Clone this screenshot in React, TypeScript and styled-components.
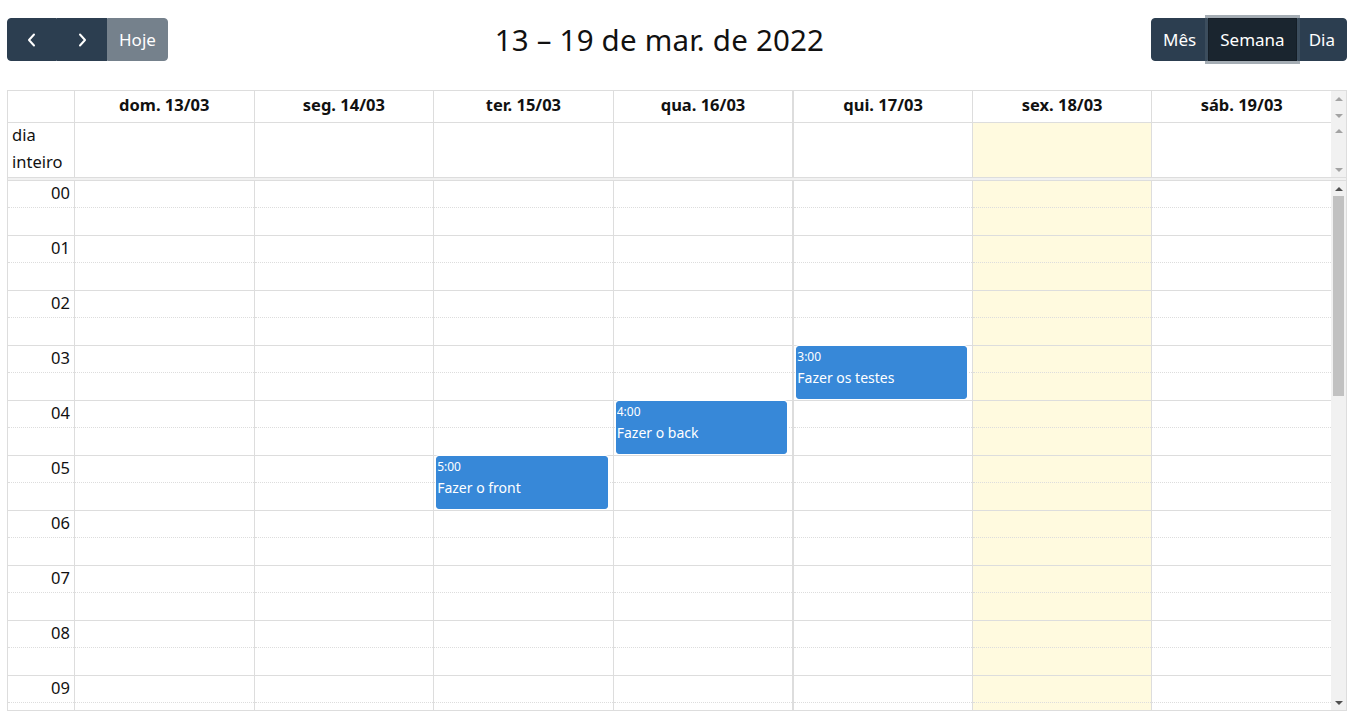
import React from 'react';
import styled, { createGlobalStyle } from 'styled-components';

const FONT = `"Noto Sans", "Open Sans", "DejaVu Sans", sans-serif`;
const LINE = '#dddddd';

const GlobalStyle = createGlobalStyle`
  html, body { margin: 0; padding: 0; background: #ffffff; overflow: hidden; }
  body { font-family: ${FONT}; color: #212529; font-size: 16px; }
  *, *::before, *::after { box-sizing: border-box; }
`;

const Page = styled.div`
  width: 1362px;
  padding: 18px 15px 0 7px;
`;

const Toolbar = styled.div`
  display: flex;
  align-items: center;
  justify-content: space-between;
  height: 43px;
  margin-bottom: 29px;
`;

const ButtonGroup = styled.div`
  display: inline-flex;
  position: relative;
`;

const Button = styled.button<{ $active?: boolean; $muted?: boolean; $icon?: boolean }>`
  height: 43px;
  width: ${(p) => (p.$icon ? '50px' : 'auto')};
  padding: ${(p) => (p.$icon ? '0' : '0 11px')};
  margin: 0;
  border: 1px solid ${(p) => (p.$active ? '#151e27' : '#2c3e50')};
  background: ${(p) => (p.$active ? '#1a252f' : '#2c3e50')};
  color: #ffffff;
  font-family: ${FONT};
  font-size: 17px;
  line-height: 1;
  display: inline-flex;
  align-items: center;
  justify-content: center;
  opacity: ${(p) => (p.$muted ? 0.65 : 1)};
  position: relative;
  z-index: ${(p) => (p.$active ? 1 : 0)};
  box-shadow: ${(p) => (p.$active ? '0 0 0 3px rgba(76, 91, 106, 0.5)' : 'none')};
  border-radius: 0;
  &:first-child { border-radius: 4px 0 0 4px; }
  &:last-child { border-radius: 0 4px 4px 0; }
`;

const Title = styled.h2`
  margin: 0;
  font-size: 29.5px;
  letter-spacing: 0.2px;
  font-weight: 400;
  color: #111;
`;

const Calendar = styled.div`
  border: 1px solid ${LINE};
  display: flex;
  flex-direction: column;
`;

const Section = styled.div<{ $h?: number }>`
  display: flex;
  height: ${(p) => (p.$h ? `${p.$h}px` : 'auto')};
`;

const SectionBody = styled.div`
  flex: 1;
  min-width: 0;
  overflow: hidden;
`;

const Scrollbar = styled.div`
  width: 15px;
  flex: 0 0 15px;
  background: #f1f1f1;
  display: flex;
  flex-direction: column;
`;

const ArrowBox = styled.div`
  height: 15px;
  flex: 0 0 15px;
  display: flex;
  align-items: center;
  justify-content: center;
`;

const Triangle = styled.div<{ $down?: boolean; $enabled?: boolean }>`
  width: 0;
  height: 0;
  border-left: 4px solid transparent;
  border-right: 4px solid transparent;
  ${(p) =>
    p.$down
      ? `border-top: 4px solid ${p.$enabled ? '#505050' : '#a3a3a3'};`
      : `border-bottom: 4px solid ${p.$enabled ? '#505050' : '#a3a3a3'};`}
`;

const Track = styled.div`
  flex: 1;
  padding: 0 2px;
`;

const Thumb = styled.div`
  height: 200px;
  background: #c1c1c1;
`;

const Grid = styled.div`
  display: grid;
  grid-template-columns: 66px repeat(7, 1fr);
`;

const HeadCell = styled.div<{ $first?: boolean; $thick?: boolean }>`
  height: 32px;
  padding-bottom: 4px;
  border-bottom: 1px solid ${LINE};
  border-left: ${(p) => (p.$first ? 'none' : `${p.$thick ? 2 : 1}px solid ${LINE}`)};
  font-weight: 700;
  font-size: 16.5px;
  display: flex;
  align-items: center;
  justify-content: center;
  color: #111;
`;

const AllDayAxis = styled.div`
  height: 54px;
  padding: 0 4px;
  font-size: 16.5px;
  color: #111;
`;

const AxisText = styled.div`
  line-height: 27px;
  margin-top: -2px;
`;

const AllDayCell = styled.div<{ $today?: boolean; $thick?: boolean }>`
  height: 54px;
  border-left: ${(p) => `${p.$thick ? 2 : 1}px solid ${LINE}`};
  background: ${(p) => (p.$today ? '#fffadf' : 'transparent')};
`;

const Divider = styled.div`
  height: 4px;
  border-top: 1px solid ${LINE};
  border-bottom: 1px solid ${LINE};
  background: #f1f1f1;
`;

const Column = styled.div<{ $axis?: boolean; $today?: boolean; $thick?: boolean }>`
  position: relative;
  display: flex;
  flex-direction: column;
  border-left: ${(p) => (p.$axis ? 'none' : `${p.$thick ? 2 : 1}px solid ${LINE}`)};
  background: ${(p) => (p.$today ? '#fffadf' : 'transparent')};
`;

const Hour = styled.div`
  height: 55px;
  border-bottom: 1px solid ${LINE};
`;

const HalfSlot = styled.div`
  height: 27px;
  border-bottom: 1px dotted ${LINE};
  text-align: right;
  padding: 0 4px;
  line-height: 24px;
  font-size: 16.5px;
  color: #111;
`;

const Event = styled.div`
  position: absolute;
  left: 2px;
  right: 5px;
  height: 53px;
  background: #3788d8;
  border: 1px solid #3788d8;
  border-radius: 3px;
  color: #ffffff;
  padding: 1px 1px 0 0;
  box-shadow: 0 0 0 1px #ffffff;
  overflow: hidden;
`;

const EventTime = styled.div`
  font-size: 12px;
  line-height: 18px;
  margin-bottom: 2px;
`;

const EventTitle = styled.div`
  font-size: 14px;
  line-height: 20px;
`;

const Chevron = ({ dir }: { dir: 'left' | 'right' }) => (
  <svg width="16" height="16" viewBox="0 0 16 16" fill="none">
    <polyline
      points={dir === 'left' ? '10,2.5 5,8 10,13.5' : '6,2.5 11,8 6,13.5'}
      stroke="#ffffff"
      strokeWidth="2"
      strokeLinecap="round"
      strokeLinejoin="round"
    />
  </svg>
);

const FakeScrollbar = ({ enabled }: { enabled?: boolean }) => (
  <Scrollbar>
    <ArrowBox>
      <Triangle $enabled={enabled} />
    </ArrowBox>
    <Track>{enabled && <Thumb />}</Track>
    <ArrowBox>
      <Triangle $down $enabled={enabled} />
    </ArrowBox>
  </Scrollbar>
);

const days = [
  'dom. 13/03',
  'seg. 14/03',
  'ter. 15/03',
  'qua. 16/03',
  'qui. 17/03',
  'sex. 18/03',
  'sáb. 19/03',
];
const TODAY = 5;
const THICK = 4;

const events: { day: number; hour: number; time: string; title: string }[] = [
  { day: 2, hour: 5, time: '5:00', title: 'Fazer o front' },
  { day: 3, hour: 4, time: '4:00', title: 'Fazer o back' },
  { day: 4, hour: 3, time: '3:00', title: 'Fazer os testes' },
];

const hours = Array.from({ length: 24 }, (_, i) => i);
const pad = (n: number) => (n < 10 ? `0${n}` : `${n}`);

export default function App() {
  return (
    <Page>
      <GlobalStyle />
      <Toolbar>
        <ButtonGroup>
          <Button $icon aria-label="prev">
            <Chevron dir="left" />
          </Button>
          <Button $icon aria-label="next">
            <Chevron dir="right" />
          </Button>
          <Button $muted>Hoje</Button>
        </ButtonGroup>
        <Title>13 – 19 de mar. de 2022</Title>
        <ButtonGroup>
          <Button>Mês</Button>
          <Button $active>Semana</Button>
          <Button>Dia</Button>
        </ButtonGroup>
      </Toolbar>
      <Calendar>
        <Section>
          <SectionBody>
            <Grid>
              <HeadCell $first />
              {days.map((d, i) => (
                <HeadCell key={d} $thick={i === THICK}>
                  {d}
                </HeadCell>
              ))}
            </Grid>
          </SectionBody>
          <FakeScrollbar />
        </Section>
        <Section>
          <SectionBody>
            <Grid>
              <AllDayAxis>
                <AxisText>
                  dia
                  <br />
                  inteiro
                </AxisText>
              </AllDayAxis>
              {days.map((d, i) => (
                <AllDayCell key={d} $today={i === TODAY} $thick={i === THICK} />
              ))}
            </Grid>
          </SectionBody>
          <FakeScrollbar />
        </Section>
        <Divider />
        <Section $h={529}>
          <SectionBody>
            <Grid>
              <Column $axis>
                {hours.map((h) => (
                  <Hour key={h}>
                    <HalfSlot>{pad(h)}</HalfSlot>
                  </Hour>
                ))}
              </Column>
              {days.map((d, i) => (
                <Column key={d} $today={i === TODAY} $thick={i === THICK}>
                  {hours.map((h) => (
                    <Hour key={h}>
                      <HalfSlot />
                    </Hour>
                  ))}
                  {events
                    .filter((e) => e.day === i)
                    .map((e) => (
                      <Event key={e.title} style={{ top: e.hour * 55 }}>
                        <EventTime>{e.time}</EventTime>
                        <EventTitle>{e.title}</EventTitle>
                      </Event>
                    ))}
                </Column>
              ))}
            </Grid>
          </SectionBody>
          <FakeScrollbar enabled />
        </Section>
      </Calendar>
    </Page>
  );
}
